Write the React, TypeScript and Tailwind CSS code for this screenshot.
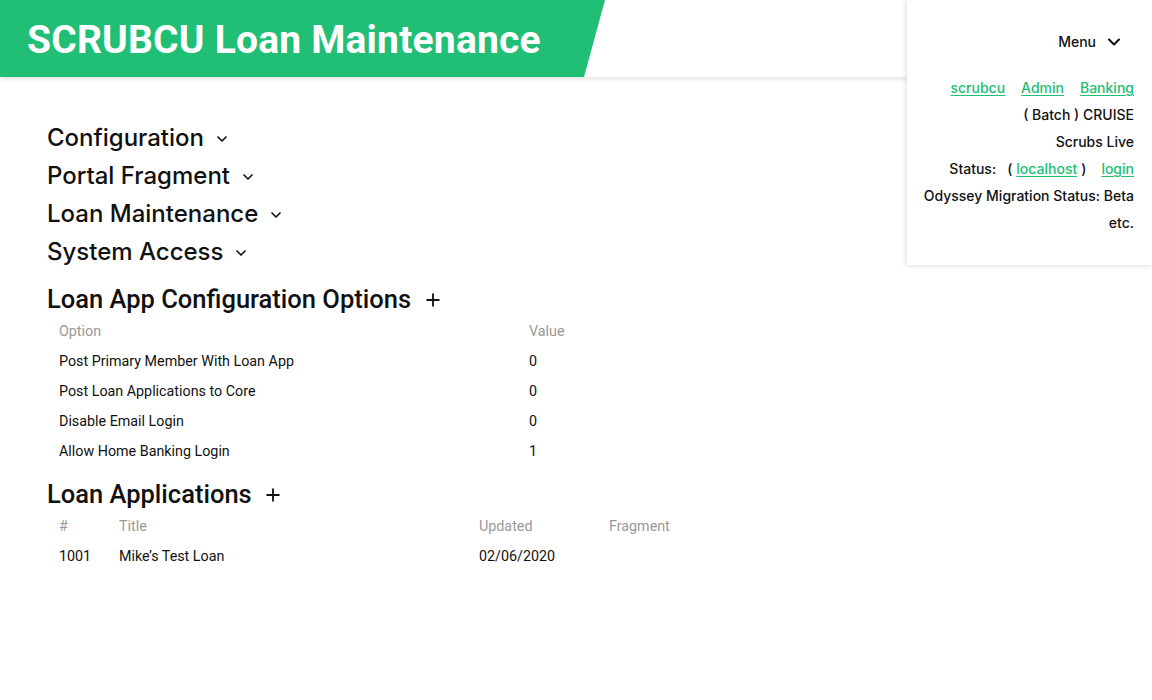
import React from 'react';
import { ChevronDown, Plus } from 'lucide-react';

const sections = ['Configuration', 'Portal Fragment', 'Loan Maintenance', 'System Access'];

const options = [
  { name: 'Post Primary Member With Loan App', value: '0' },
  { name: 'Post Loan Applications to Core', value: '0' },
  { name: 'Disable Email Login', value: '0' },
  { name: 'Allow Home Banking Login', value: '1' },
];

const apps = [{ id: '1001', title: 'Mike\u2019s Test Loan', updated: '02/06/2020', fragment: '' }];

const roboto = "font-['Roboto','Liberation_Sans',sans-serif]";
const inter = "font-['Inter','Liberation_Sans',sans-serif]";

const MenuPanel = () => (
  <div className={`absolute right-0 top-0 w-[245px] h-[265px] bg-white shadow-[0_0_6px_rgba(0,0,0,0.18)] pr-[18px] text-[14px] font-medium text-[#111] ${inter}`}>
    <div className="flex items-center justify-end h-[84px] pr-[10px] pb-[1px] gap-[8px]">
      <span className="text-[14px]">Menu</span>
      <ChevronDown size={20} strokeWidth={2.5} />
    </div>
    <div className="flex flex-col items-end leading-[27px] -mt-[10px]">
      <div className="flex gap-[16px]">
        <a className="text-[#21bf73] underline underline-offset-2">scrubcu</a>
        <a className="text-[#21bf73] underline underline-offset-2">Admin</a>
        <a className="text-[#21bf73] underline underline-offset-2">Banking</a>
      </div>
      <div>( Batch ) CRUISE</div>
      <div>Scrubs Live</div>
      <div className="flex">
        <span>Status:</span>
        <span className="ml-[11px]">(</span>
        <a className="ml-[4px] text-[#21bf73] underline underline-offset-2">localhost</a>
        <span className="ml-[4px]">)</span>
        <a className="ml-[15px] text-[#21bf73] underline underline-offset-2">login</a>
      </div>
      <div>Odyssey Migration Status: Beta</div>
      <div>etc.</div>
    </div>
  </div>
);

export default function App() {
  return (
    <div className="relative min-h-[700px] bg-white text-[#111]">
      <header className="h-[77px] bg-white shadow-[0_2px_5px_rgba(0,0,0,0.12)] flex">
        <div className="w-[605px] h-full bg-[#21bf76] [clip-path:polygon(0_0,100%_0,calc(100%-21px)_100%,0_100%)] flex items-center pl-[27px] pt-[3px]">
          <h1 className={`text-white text-[39px] font-bold tracking-[0.2px] ${roboto}`}>SCRUBCU Loan Maintenance</h1>
        </div>
      </header>

      <main className="pl-[47px] pt-[42px]">
        <div className={`flex flex-col ${inter}`}>
          {sections.map((s) => (
            <div key={s} className="flex items-center h-[38px] gap-[10px]">
              <span className="text-[24px] font-medium">{s}</span>
              <ChevronDown size={16} strokeWidth={2.5} className="mt-[2px]" />
            </div>
          ))}
        </div>

        <section className={`mt-[11px] ${roboto}`}>
          <div className="flex items-center h-[35px] gap-[12px]">
            <h2 className="text-[25.5px] font-medium">Loan App Configuration Options</h2>
            <Plus size={20} strokeWidth={2.2} />
          </div>
          <div className="pl-[12px] text-[14.3px]">
            <div className="grid grid-cols-[470px_1fr] h-[30px] items-center text-[#999]">
              <span>Option</span>
              <span>Value</span>
            </div>
            {options.map((o) => (
              <div key={o.name} className="grid grid-cols-[470px_1fr] h-[30px] items-center">
                <span>{o.name}</span>
                <span>{o.value}</span>
              </div>
            ))}
          </div>
        </section>

        <section className={`mt-[10px] ${roboto}`}>
          <div className="flex items-center h-[35px] gap-[11px]">
            <h2 className="text-[25.5px] font-medium">Loan Applications</h2>
            <Plus size={20} strokeWidth={2.2} />
          </div>
          <div className="pl-[12px] text-[14.3px]">
            <div className="grid grid-cols-[60px_360px_130px_1fr] h-[30px] items-center text-[#999]">
              <span>#</span>
              <span>Title</span>
              <span>Updated</span>
              <span>Fragment</span>
            </div>
            {apps.map((a) => (
              <div key={a.id} className="grid grid-cols-[60px_360px_130px_1fr] h-[30px] items-center">
                <span>{a.id}</span>
                <span>{a.title}</span>
                <span>{a.updated}</span>
                <span>{a.fragment}</span>
              </div>
            ))}
          </div>
        </section>
      </main>

      <MenuPanel />
    </div>
  );
}
